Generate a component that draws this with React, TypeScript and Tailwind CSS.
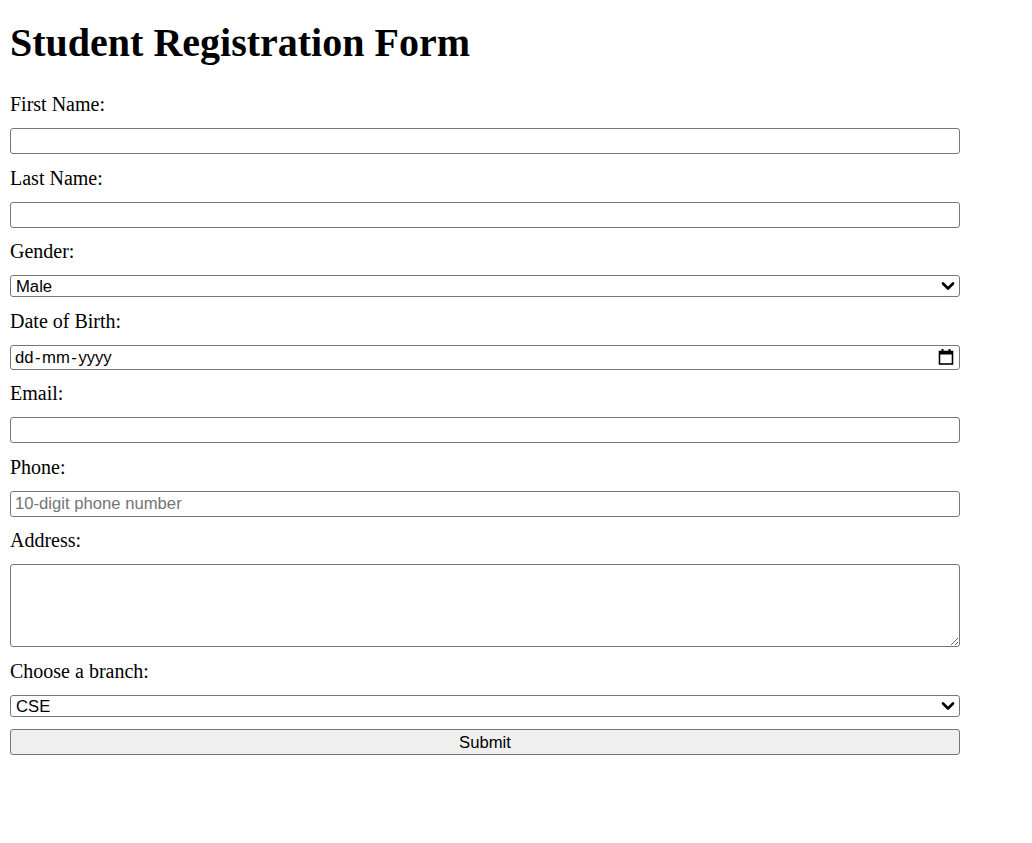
import React from "react";

const controlBase =
  "block w-[950px] border border-[#767676] rounded-[3px] bg-white text-black font-['Liberation_Sans',Arial,sans-serif] text-[16.67px] outline-none";

const Label = ({children}: {children: React.ReactNode}) => (
  <label className="block leading-[22.5px] text-[20px]">{children}</label>
);

const Chevron = () => (
  <svg className="pointer-events-none absolute right-[5px] top-1/2 -translate-y-1/2" width="14" height="10" viewBox="0 0 14 10">
    <polyline points="2,2.5 7,7.5 12,2.5" fill="none" stroke="#000" strokeWidth="2.6" strokeLinecap="round" strokeLinejoin="round"/>
  </svg>
);

const Calendar = () => (
  <svg className="absolute right-[5px] top-1/2 -translate-y-1/2" width="16" height="17" viewBox="0 0 16 17">
    <rect x="3.5" y="0.5" width="2" height="3" fill="#000"/>
    <rect x="10.5" y="0.5" width="2" height="3" fill="#000"/>
    <rect x="1.5" y="3" width="13" height="12.5" fill="none" stroke="#000" strokeWidth="1.6"/>
    <rect x="1.5" y="3" width="13" height="3" fill="#000"/>
  </svg>
);

function Select({options}: {options: string[]}) {
  return (
    <div className="relative w-[950px]">
      <select className={controlBase + " h-[22px] appearance-none pl-[5px] pr-6 pt-[1px] leading-[19px]"} defaultValue={options[0]}>
        {options.map(o => (
          <option key={o}>{o}</option>
        ))}
      </select>
      <Chevron/>
    </div>
  );
}

export default function App() {
  return (
    <div className="min-h-[843px] bg-white text-black font-['Liberation_Serif','Times_New_Roman',serif] px-[10px] pt-[21px]">
      <h1 className="text-[40px] font-bold leading-[44px] mb-[28px]">Student Registration Form</h1>

      <form className="flex flex-col gap-[12.5px]" onSubmit={e => e.preventDefault()}>
        <Label>First Name:</Label>
        <input type="text" className={controlBase + " h-[26px] px-[5px]"}/>

        <Label>Last Name:</Label>
        <input type="text" className={controlBase + " h-[26px] px-[5px]"}/>

        <Label>Gender:</Label>
        <Select options={["Male", "Female", "Other"]}/>

        <Label>Date of Birth:</Label>
        <div className={controlBase + " relative h-[25px] pl-[4px] flex items-center"}>
          <span>dd</span>
          <span className="mx-[1.5px]">-</span>
          <span>mm</span>
          <span className="mx-[1.5px]">-</span>
          <span>yyyy</span>
          <Calendar/>
        </div>

        <Label>Email:</Label>
        <input type="email" className={controlBase + " h-[26px] px-[5px]"}/>

        <Label>Phone:</Label>
        <input
          type="tel"
          placeholder="10-digit phone number"
          className={controlBase + " h-[26px] px-[4px] placeholder:text-[#757575]"}
        />

        <Label>Address:</Label>
        <textarea className={controlBase + " h-[83px] px-[5px] py-[2px] resize"}/>

        <Label>Choose a branch:</Label>
        <Select options={["CSE", "ECE", "EEE", "MECH", "CIVIL"]}/>

        <button
          type="submit"
          className="block w-[950px] h-[26px] border border-[#767676] rounded-[3px] bg-[#efefef] text-black font-['Liberation_Sans',Arial,sans-serif] text-[16.67px] pt-[1px] leading-[23px]"
        >
          Submit
        </button>
      </form>
    </div>
  );
}
